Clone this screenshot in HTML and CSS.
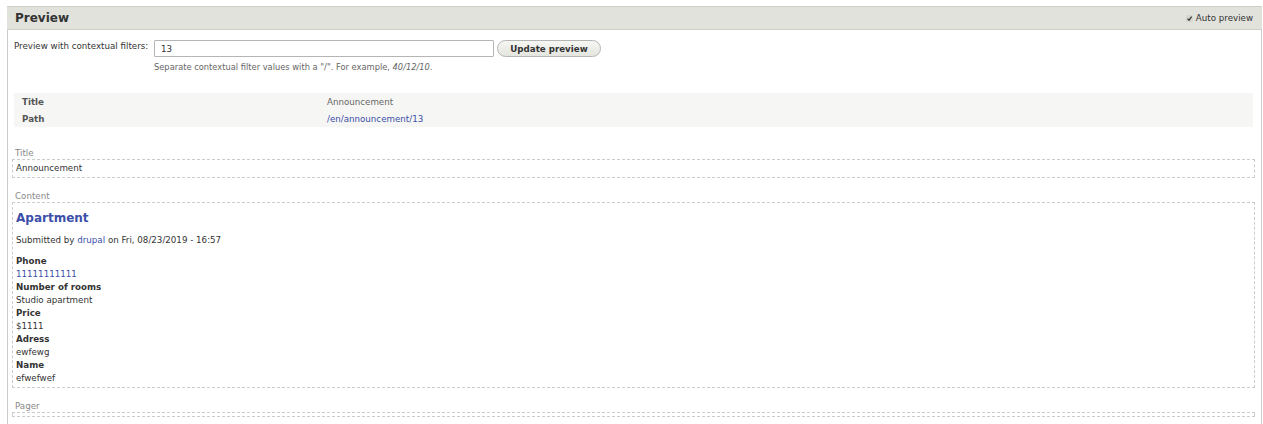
FILE: index.html
```html
<!DOCTYPE html>
<html lang="en">
<head>
<meta charset="utf-8">
<title>Preview</title>
<link rel="stylesheet" href="styles.css">
</head>
<body>
<section class="preview">
  <header class="preview-head">
    <h2 class="preview-title">Preview</h2>
    <label class="auto">
      <span class="auto-box"><svg viewBox="0 0 7 7" width="7" height="7"><path d="M1.5 3.6 L3 5.2 L5.6 1.6" fill="none" stroke="#333" stroke-width="1.2"/></svg></span>
      Auto preview
    </label>
  </header>
  <div class="preview-body">
    <div class="filters">
      <label class="filters-label" for="args">Preview with contextual filters:</label>
      <div class="filters-field">
        <div class="filters-row">
          <input id="args" class="text-input" type="text" value="13">
          <button class="btn" type="button">Update preview</button>
        </div>
        <div class="help">Separate contextual filter values with a "/". For example, <em>40/12/10</em>.</div>
      </div>
    </div>

    <table class="info">
      <tr><th>Title</th><td>Announcement</td></tr>
      <tr><th>Path</th><td><a href="#">/en/announcement/13</a></td></tr>
    </table>

    <div class="area area-first">
      <div class="area-label">Title</div>
      <div class="area-box">Announcement</div>
    </div>

    <div class="area">
      <div class="area-label">Content</div>
      <div class="area-box">
        <h3 class="node-title"><a href="#">Apartment</a></h3>
        <div class="submitted">Submitted by <a href="#">drupal</a> on Fri, 08/23/2019 - 16:57</div>
        <div class="field"><div class="field-label">Phone</div><div class="field-item"><a href="#">11111111111</a></div></div>
        <div class="field"><div class="field-label">Number of rooms</div><div class="field-item">Studio apartment</div></div>
        <div class="field"><div class="field-label">Price</div><div class="field-item">$1111</div></div>
        <div class="field"><div class="field-label">Adress</div><div class="field-item">ewfewg</div></div>
        <div class="field"><div class="field-label">Name</div><div class="field-item">efwefwef</div></div>
      </div>
    </div>

    <div class="area">
      <div class="area-label">Pager</div>
      <div class="area-box pager-box"></div>
    </div>
  </div>
</section>
</body>
</html>
```
FILE: styles.css
```css
* { box-sizing: border-box; }

html, body {
  margin: 0;
  background: #fff;
  overflow: hidden;
}

body {
  font-family: "DejaVu Sans", sans-serif;
  font-size: 8.7px;
  color: #333;
  padding: 6px 1px 0 7px;
}

a { color: #3b4fa8; text-decoration: none; }

.preview {
  border-left: 1px solid #ccc;
  border-right: 1px solid #ccc;
  height: 430px;
}

.preview-head {
  display: flex;
  align-items: center;
  justify-content: space-between;
  height: 24px;
  background: #e1e2dc;
  border-top: 1px solid #cfcfc8;
  border-bottom: 1px solid #cfcfc8;
  padding: 0 9px 0 8px;
  margin-left: -1px;
  margin-right: -1px;
}

.preview-title {
  margin: 0;
  font-size: 12px;
  font-weight: bold;
  color: #333;
}

.auto {
  display: flex;
  align-items: center;
  gap: 3px;
  color: #333;
}

.auto-box {
  display: block;
  width: 7px;
  height: 7px;
  background: #d6d6d2;
  border-radius: 1px;
  line-height: 0;
}

.preview-body {
  padding: 10px 6px 0 5px;
}

.filters {
  display: flex;
  align-items: flex-start;
}

.filters-label {
  padding: 1px 0 0 1px;
  width: 141px;
  flex: none;
}

.filters-row {
  display: flex;
  align-items: center;
  gap: 4px;
}

.text-input {
  width: 340px;
  height: 17px;
  border: 1px solid #b5b5b5;
  border-radius: 1px;
  font: 8.7px "DejaVu Sans", sans-serif;
  color: #333;
  padding: 0 6px;
  margin: 0;
}

.btn {
  height: 17px;
  width: 104px;
  border: 1px solid #b5b5b5;
  border-radius: 9px;
  background: linear-gradient(#f6f6f3, #e5e5df);
  font: bold 8.7px "DejaVu Sans", sans-serif;
  color: #333;
  padding: 0;
  margin: 0 0 0 -1px;
}

.help {
  margin-top: 5px;
  color: #666;
  font-size: 8.3px;
}

.info {
  margin: 21px 0 0 1px;
  width: calc(100% - 3px);
  border-collapse: collapse;
  background: #f6f6f4;
}

.info th {
  text-align: left;
  font-weight: bold;
  color: #555;
  width: 313px;
  padding: 0 0 0 8px;
  height: 17px;
}

.info td { color: #666; padding: 0; }

.area { margin-top: 12px; }

.area.area-first { margin-top: 20px; }

.area-label {
  color: #888;
  padding-left: 3px;
  line-height: 12px;
}

.area-box {
  border: 1px dashed #ccc;
  padding: 2px 3px;
  line-height: 13px;
  color: #333;
}

.area-box,
.area-label { margin-left: -1px; }

.node-title {
  margin: 5px 0 8px;
  font-size: 12px;
  line-height: 16px;
}

.submitted { margin-bottom: 8px; }

.field-label { font-weight: bold; }

.pager-box { height: 5px; padding: 0; }
```
